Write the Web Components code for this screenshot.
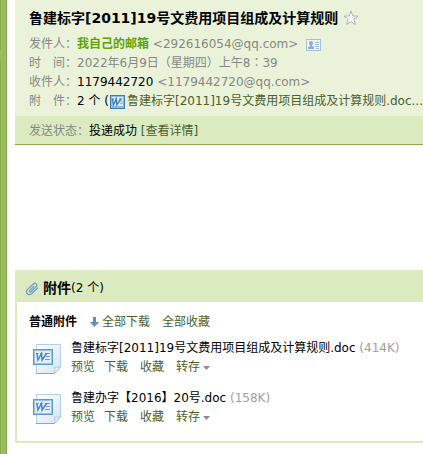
<!doctype html>
<html lang="zh-CN">
<head>
    <meta charset="utf-8">
    <title>鲁建标字[2011]19号文费用项目组成及计算规则</title>

    <style type="text/css">
        body {
            margin: 0;
            background: #fff;
            color: #000;
            font: 12px/19px "DejaVu Sans", "Noto Sans CJK SC", sans-serif;
            --head: #eaf3d9;
            --band: #dbeabf;
            --link: #4b5e2c;
            --muted: #858885;
        }
    </style>
</head>
<body>
    <mail-page>
        <mail-header subject="鲁建标字[2011]19号文费用项目组成及计算规则">
            <mail-field label="发件人：" muted><b>我自己的邮箱</b> &lt;292616054@qq.com&gt;<card-icon></card-icon></mail-field>
            <mail-field label="时　间：" muted>2022年6月9日（星期四）上午8<span lang="zh-TW">：</span>39</mail-field>
            <mail-field label="收件人："><span>1179442720</span> <i>&lt;1179442720@qq.com&gt;</i></mail-field>
            <mail-field label="附　件：">2 个 (<word-icon></word-icon><a href="#attachments">鲁建标字[2011]19号文费用项目组成及计算规则.doc...</a></mail-field>
            <mail-field slot="status" label="发送状态：">投递成功 <a href="#status">[查看详情]</a></mail-field>
        </mail-header>
        <attachment-box id="attachments" count="2">
            <attachment-item name="鲁建标字[2011]19号文费用项目组成及计算规则.doc" size="414K"></attachment-item>
            <attachment-item name="鲁建办字【2016】20号.doc" size="158K"></attachment-item>
        </attachment-box>
    </mail-page>
</body>
<script>
    (function(window, document, undefined) {

        class BaseElement extends HTMLElement {
            connectedCallback() {
                if (this.shadowRoot) return;
                this.attachShadow({mode:'open'}).innerHTML = this.render();
            }
        }

        // Splitter bar on the left, message on the right.
        class MailPage extends BaseElement {
            render() {
                return `
                <style>
                    :host {
                        display: flex;
                        min-height: 100vh;
                        overflow: hidden;
                    }
                    .bar {
                        flex: none;
                        width: 7px;
                        box-sizing: border-box;
                        border: solid #87a64c;
                        border-width: 0 1px;
                        background: #98bb59;
                        box-shadow: inset 1px 0 #a3c267;
                        position: relative;
                    }
                    .bar svg {
                        position: absolute;
                        left: -1px;
                        top: 50px;
                    }
                    main {
                        flex: 1;
                        min-width: 0;
                        padding-left: 8px;
                    }
                </style>
                <div class="bar"><svg width="3" height="11"><path d="M0 0l2 3v5l-2 3z" fill="#98bb59"/></svg></div>
                <main><slot></slot></main>`
            }
        }

        class MailHeader extends BaseElement {
            render() {
                return `
                <style>
                    :host {
                        display: block;
                        background: var(--head);
                        border-bottom: 1px solid #8eaa50;
                    }
                    .top {
                        padding: 8px 0 5px 14px;
                    }
                    h1 {
                        display: flex;
                        align-items: center;
                        gap: 5px;
                        margin: 0 0 7px;
                        font-size: 14px;
                        line-height: 20px;
                        white-space: nowrap;
                    }
                    button {
                        display: flex;
                        padding: 0;
                        border: 0;
                        background: none;
                        cursor: pointer;
                    }
                    .status {
                        padding: 6px 0 3px 14px;
                        background: var(--band);
                    }
                </style>
                <div class="top">
                    <h1>${this.getAttribute('subject')}
                        <button aria-label="星标">
                            <svg width="16" height="16" viewBox="0 0 16 16"><path d="M8 1l1.800 5 5.200.2-4.100 3.100 1.500 5.200L8 11.500l-4.400 3 1.500-5.200L1 6.200 6.200 6z" fill="#fff" stroke="#b0b0ba"/></svg>
                        </button>
                    </h1>
                    <slot></slot>
                </div>
                <div class="status"><slot name="status"></slot></div>`
            }
        }

        class MailField extends BaseElement {
            render() {
                return `
                <style>
                    :host {
                        display: flex;
                        white-space: nowrap;
                    }
                    .label,
                    :host([muted]) .value,
                    ::slotted(i) {
                        color: var(--muted);
                        font-style: normal;
                    }
                    .value {
                        min-width: 0;
                        overflow: hidden;
                    }
                    ::slotted(b) {
                        color: #5fa207;
                    }
                    ::slotted(a) {
                        color: var(--link);
                        text-decoration: none;
                    }
                </style>
                <span class="label">${this.getAttribute('label')}</span>
                <span class="value"><slot></slot></span>`
            }
        }

        // Contact card
        class CardIcon extends BaseElement {
            render() {
                return `
                <style>
                    :host {
                        display: inline-block;
                        margin-left: 8px;
                        vertical-align: middle;
                    }
                    svg {
                        display: block;
                    }
                </style>
                <svg width="15" height="12" viewBox="0 0 15 12">
                    <rect x=".5" y=".5" width="14" height="11" fill="#edf4f5" stroke="#a4bedb"/>
                    <path d="M5 2c1.300 0 2 .8 2 2s-.6 2-1 2.300v.7l2 1V10H2V8l2-1v-.7C3.500 6 3 5.200 3 4s.7-2 2-2z" fill="#8eb0d6"/>
                    <path d="M9 3.500h4M9 5.500h4M9 7.500h4M10 9.500h3" stroke="#a4bedb"/>
                </svg>`
            }
        }

        // Small Word badge used inside a line of text
        class WordIcon extends BaseElement {
            render() {
                return `
                <style>
                    :host {
                        display: inline-block;
                        margin: 0 2px 0 1px;
                        vertical-align: middle;
                    }
                    svg {
                        display: block;
                    }
                </style>
                <svg width="15" height="14" viewBox="0 0 15 14">
                    <rect x=".5" y=".5" width="14" height="13" fill="#4f8fcb" stroke="#3d79b5"/>
                    <rect x="1.500" y="1.500" width="12" height="11" fill="#dcebf8" stroke="#8fbce4"/>
                    <path d="M11 6.500h2M10 8.500h3M2 11.500h11" stroke="#8db5dc"/>
                    <path d="M2.500 4l.8 6 3-6 .4 6 4.300-6" fill="none" stroke="#3c7dbf" stroke-width="1.300"/>
                    <path d="M2 4h2M5 4h2M9 4h3" stroke="#3c7dbf"/>
                </svg>`
            }
        }

        class AttachmentBox extends BaseElement {
            render() {
                return `
                <style>
                    :host {
                        display: block;
                        margin-top: 125px;
                        border: solid var(--band);
                        border-width: 0 0 2px 2px;
                        padding-bottom: 2px;
                    }
                    header {
                        display: flex;
                        align-items: center;
                        height: 32px;
                        padding: 5px 0 0 8px;
                        box-sizing: border-box;
                        background: var(--band);
                    }
                    h2 {
                        margin: 0 0 0 4px;
                        font-size: 14px;
                    }
                    nav {
                        display: flex;
                        gap: 12px;
                        padding: 11px 0 7px 12px;
                    }
                    a {
                        color: var(--link);
                        text-decoration: none;
                    }
                    a svg {
                        margin-right: 2px;
                        vertical-align: -1px;
                    }
                </style>
                <header>
                    <svg width="14" height="14" viewBox="0 0 14 14" fill="none" stroke="#6f9ac8" stroke-width="1.200" stroke-linecap="round">
                        <path d="M8.700 4.500L4.800 8.400c-.9 1 .3 2.200 1.300 1.300l5-5c2-2-.7-4.600-2.700-2.700L2.500 7.400c-3 3 1.200 7.200 4.200 4.200L12.500 6"/>
                    </svg>
                    <h2>附件</h2><span>(${this.getAttribute('count')} 个)</span>
                </header>
                <nav>
                    <b>普通附件</b>
                    <a href="#download"><svg width="11" height="10" viewBox="0 0 11 10"><path d="M4 0h3v5h3L5.500 10 1 5h3z" fill="#648fc0"/></svg>全部下载</a>
                    <a href="#favorite">全部收藏</a>
                </nav>
                <slot></slot>`
            }
        }

        class AttachmentItem extends BaseElement {
            render() {
                return `
                <style>
                    :host {
                        display: flex;
                        gap: 8px;
                        height: 50px;
                        padding-left: 15px;
                        white-space: nowrap;
                    }
                    .icon {
                        flex: none;
                        margin-top: 4px;
                    }
                    .size {
                        color: #a0a0a0;
                    }
                    .actions,
                    .more {
                        display: flex;
                        gap: 9px;
                    }
                    .more {
                        gap: 12px;
                    }
                    a,
                    button {
                        color: var(--link);
                        text-decoration: none;
                    }
                    button {
                        display: flex;
                        align-items: center;
                        gap: 3px;
                        padding: 0;
                        border: 0;
                        background: none;
                        font: inherit;
                        cursor: pointer;
                    }
                </style>
                <svg class="icon" width="31" height="32" viewBox="0 0 31 32">
                    <defs>
                        <linearGradient id="page" x2="1" y2="1">
                            <stop offset="0" stop-color="#fff"/>
                            <stop offset="1" stop-color="#d3e5f6"/>
                        </linearGradient>
                    </defs>
                    <path d="M4.500 1.500h24v22l-6 7h-18z" fill="url(#page)" stroke="#b4cfe9"/>
                    <path d="M4 30.500h18.500l6-7" fill="none" stroke="#7ea9d3"/>
                    <path d="M22.500 30.500c.8-2 .8-4 .3-6.500 2 .5 4 .4 5.700-.5z" fill="#fff" stroke="#a9c8e6"/>
                    <rect x="1" y="6" width="20" height="16" fill="#5f98cd"/>
                    <rect x="2.500" y="7.500" width="17" height="13" fill="#e2eefa" stroke="#9cc4e8"/>
                    <path d="M15 10.500h3M14 13.500h4M13 16.500h5" stroke="#6d9fcf"/>
                    <path d="M5 10.500l1 6.500 3.500-6.500.6 6.500 4.400-6.500" fill="none" stroke="#4d88c4" stroke-width="1.500"/>
                    <path d="M4 10.500h2.500M8 10.500h2.500M13 10.500h3" stroke="#4d88c4"/>
                </svg>
                <div>
                    <div>${this.getAttribute('name')} <span class="size">(${this.getAttribute('size')})</span></div>
                    <div class="actions">
                        <a href="#preview">预览</a>
                        <div class="more">
                            <a href="#download">下载</a>
                            <a href="#favorite">收藏</a>
                            <button>转存<svg width="7" height="4"><path d="M0 0h7L3.500 4z" fill="#8c8c8c"/></svg></button>
                        </div>
                    </div>
                </div>`
            }
        }

        window.customElements.define('mail-page', MailPage);
        window.customElements.define('mail-header', MailHeader);
        window.customElements.define('mail-field', MailField);
        window.customElements.define('card-icon', CardIcon);
        window.customElements.define('word-icon', WordIcon);
        window.customElements.define('attachment-box', AttachmentBox);
        window.customElements.define('attachment-item', AttachmentItem);
    })(window, document);
</script>
</html>
